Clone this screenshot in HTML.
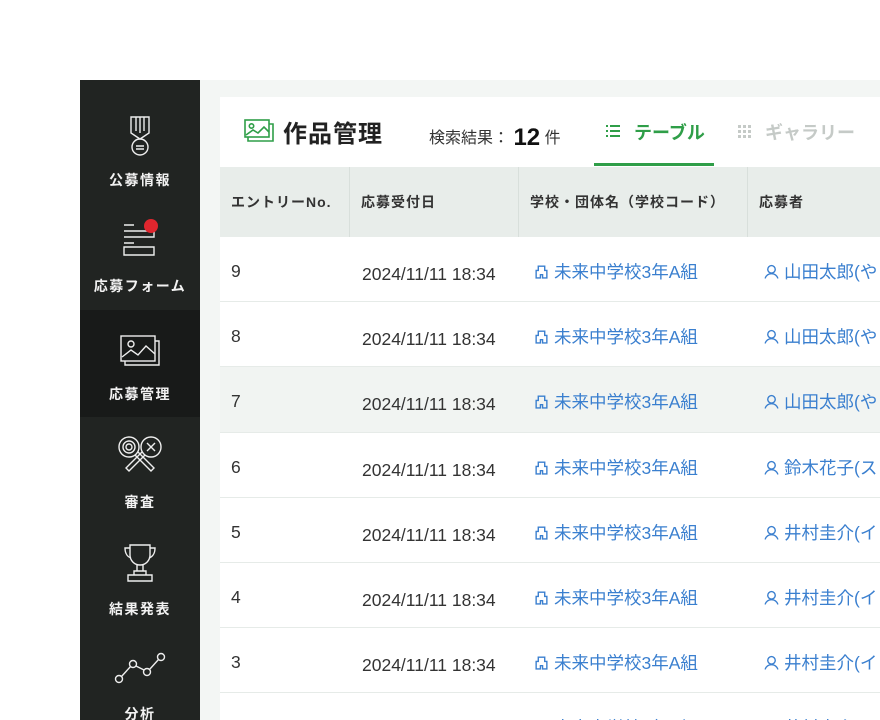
<!DOCTYPE html>
<html style="overflow:hidden;height:720px"><head><meta charset="utf-8"><style>
*{margin:0;padding:0;box-sizing:border-box}
body{width:880px;height:720px;overflow:hidden;background:#fff;font-family:"Liberation Sans","Noto Sans CJK JP",sans-serif;position:relative}
.side{position:absolute;left:80px;top:80px;width:120px;height:640px;background:#212422;overflow:hidden}
.item{position:absolute;left:0;width:120px;height:107px;color:#f2f2f2;font-size:14px;font-weight:bold;text-align:center;letter-spacing:1.5px}
.item svg{position:absolute;left:50%;transform:translateX(-50%)}
.item .lb{position:absolute;left:0;right:0}
.main{position:absolute;left:200px;top:80px;width:680px;height:640px;background:#f3f6f4;overflow:hidden}
.card{position:absolute;left:20px;top:17px;width:700px;height:623px;background:#fff;overflow:hidden}
.hdr{position:absolute;left:0;top:0;height:70px;width:700px}
.th{position:absolute;top:70px;height:70px;background:#e8edea;font-size:14px;font-weight:bold;color:#333;line-height:70px;padding-left:11px;border-right:1px solid #d8dfdb;letter-spacing:1px;white-space:nowrap}
.row{position:absolute;left:0;width:700px;height:65.2px;border-bottom:1px solid #e6ebe8;font-size:17.5px;color:#333;white-space:nowrap}
.row span{position:absolute;top:25px}
.blue{color:#3a7fcf}
</style></head><body>
<div class="side">
 <div class="item" style="top:0">
  <svg style="top:35px" width="24" height="42" viewBox="0 0 24 42" fill="none" stroke="#eee" stroke-width="1.4"><path d="M3 2h18v16l-9 6-9-6z"/><path d="M8 2v14M12 2v16M16 2v14"/><circle cx="12" cy="32" r="8"/><path d="M8 31h8M8 34h8"/></svg>
  <div class="lb" style="top:90px">公募情報</div></div>
 <div class="item" style="top:107px">
  <svg style="top:30px" width="40" height="46" viewBox="0 0 40 46" fill="none" stroke="#eee" stroke-width="1.4"><path d="M4 8h10M4 14h30v6H4M4 26h10M4 30h30v8H4z"/><circle cx="31" cy="9" r="7" fill="#e0262e" stroke="none"/></svg>
  <div class="lb" style="top:89px">応募フォーム</div></div>
 <div class="item" style="top:230px;background:#181a19;height:107px">
  <svg style="top:23px" width="42" height="36" viewBox="0 0 42 36" fill="none" stroke="#eee" stroke-width="1.4"><rect x="2" y="3" width="34" height="25"/><path d="M6 28v4h34V8h-4"/><circle cx="12" cy="11" r="3"/><path d="M3 24l9-7 7 5 8-9 9 8"/></svg>
  <div class="lb" style="top:74px">応募管理</div></div>
 <div class="item" style="top:337px">
  <svg style="top:18px" width="50" height="40" viewBox="0 0 50 40" fill="none" stroke="#eee" stroke-width="1.4"><circle cx="14" cy="12" r="10"/><circle cx="14" cy="12" r="6"/><circle cx="14" cy="12" r="3"/><circle cx="36" cy="12" r="10"/><path d="M32 8l8 8M40 8l-8 8"/><path d="M20 20l16 16l3-3l-16-16M30 20L14 36l-3-3l16-16"/></svg>
  <div class="lb" style="top:75px">審査</div></div>
 <div class="item" style="top:444px">
  <svg style="top:19px" width="36" height="40" viewBox="0 0 36 40" fill="none" stroke="#eee" stroke-width="1.4"><path d="M8 2h20v10a10 10 0 0 1-20 0z"/><path d="M8 5H3c0 6 3 9 6 10M28 5h5c0 6-3 9-6 10"/><path d="M15 22v6h6v-6M12 28h12v4H12zM6 32h24v6H6z"/></svg>
  <div class="lb" style="top:75px">結果発表</div></div>
 <div class="item" style="top:551px">
  <svg style="top:20px" width="52" height="34" viewBox="0 0 52 34" fill="none" stroke="#eee" stroke-width="1.4"><circle cx="5" cy="28" r="3.5"/><circle cx="19" cy="13" r="3.5"/><circle cx="33" cy="21" r="3.5"/><circle cx="47" cy="6" r="3.5"/><path d="M7.5 25.5l9-10M22 15l8 4M35.5 18.5l9-10"/></svg>
  <div class="lb" style="top:73px">分析</div></div>
</div>
<div class="main"><div class="card">
 <div class="hdr">
  <svg style="position:absolute;left:24px;top:22px" width="30" height="24" viewBox="0 0 30 24" fill="none" stroke="#2f9e48" stroke-width="1.6"><rect x="1" y="1" width="24" height="17"/><path d="M4 18v4h25V5h-4"/><circle cx="7.5" cy="7" r="2.2"/><path d="M2 16l7-5 5 3 6-6 5 5"/></svg>
  <div style="position:absolute;left:63px;top:17px;font-size:24px;font-weight:bold;color:#222;letter-spacing:1px">作品管理</div>
  <div style="position:absolute;left:209px;top:25px;font-size:16px;color:#333;white-space:nowrap">検索結果： <b style="font-size:24px;position:relative;top:2px;color:#111">12</b> 件</div>
  <svg style="position:absolute;left:386px;top:28px" width="14" height="12" viewBox="0 0 14 12" fill="#2f9e48"><rect x="0" y="0" width="2" height="2"/><rect x="4" y="0" width="10" height="2"/><rect x="0" y="5" width="2" height="2"/><rect x="4" y="5" width="10" height="2"/><rect x="0" y="10" width="2" height="2"/><rect x="4" y="10" width="10" height="2"/></svg>
  <div style="position:absolute;left:414px;top:22px;font-size:18px;font-weight:bold;color:#2f9e48">テーブル</div>
  <div style="position:absolute;left:374px;top:66px;width:120px;height:3px;background:#2f9e48"></div>
  <svg style="position:absolute;left:518px;top:28px" width="13" height="13" viewBox="0 0 13 13" fill="#c5cac7"><rect x="0" y="0" width="3" height="3"/><rect x="5" y="0" width="3" height="3"/><rect x="10" y="0" width="3" height="3"/><rect x="0" y="5" width="3" height="3"/><rect x="5" y="5" width="3" height="3"/><rect x="10" y="5" width="3" height="3"/><rect x="0" y="10" width="3" height="3"/><rect x="5" y="10" width="3" height="3"/><rect x="10" y="10" width="3" height="3"/></svg>
  <div style="position:absolute;left:545px;top:22px;font-size:18px;font-weight:bold;color:#c5cac7;white-space:nowrap">ギャラリー</div>
 </div>
 <div class="th" style="left:0;width:130px">エントリーNo.</div>
 <div class="th" style="left:130px;width:169px">応募受付日</div>
 <div class="th" style="left:299px;width:229px">学校・団体名（学校コード）</div>
 <div class="th" style="left:528px;width:172px;border:none">応募者</div>
 <div id="rows"></div>
</div></div>
<script>
var d=[[9,'山田太郎(や'],[8,'山田太郎(や'],[7,'山田太郎(や'],[6,'鈴木花子(ス'],[5,'井村圭介(イ'],[4,'井村圭介(イ'],[3,'井村圭介(イ'],[2,'井村圭介(イ']];
var h='';d.forEach(function(r,i){
h+='<div class="row" style="top:'+(140+i*65.2)+'px;'+(r[0]==7?'background:#f1f4f2':'')+'"><span style="left:11px;top:24px">'+r[0]+'</span><span style="left:142px;top:27px">2024/11/11 18:34</span>'+
'<span class="blue" style="left:314px;top:22px"><svg width="15" height="15" viewBox="0 0 14 14" fill="none" stroke="#3a7fcf" stroke-width="1.3" style="vertical-align:-1px;margin-right:5px"><path d="M2 13V6h2V2h6v4h2v7H8V10H6v3z"/></svg>未来中学校3年A組</span>'+
'<span class="blue" style="left:544px;top:22px"><svg width="15" height="15" viewBox="0 0 14 14" fill="none" stroke="#3a7fcf" stroke-width="1.3" style="vertical-align:-1px;margin-right:5px"><circle cx="7" cy="5" r="3.5"/><path d="M1 13.5c1-3 3-4.5 6-4.5s5 1.5 6 4.5"/></svg>'+r[1]+'</span></div>';});
document.getElementById('rows').innerHTML=h;
</script>
</body></html>
